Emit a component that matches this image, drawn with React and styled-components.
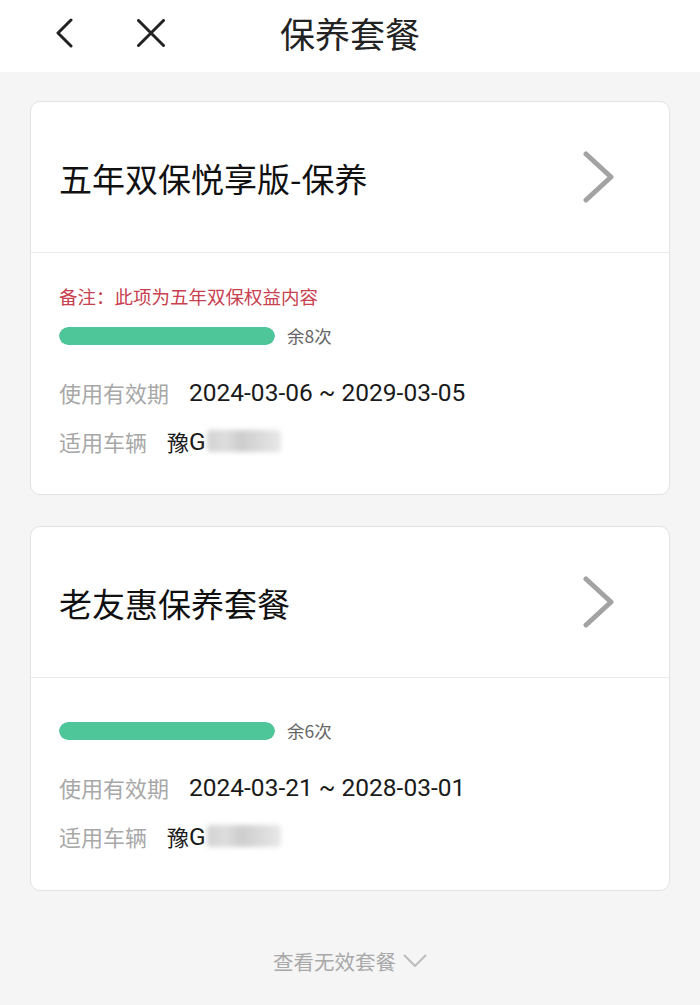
import React from "react";
import styled, { createGlobalStyle } from "styled-components";

const Global = createGlobalStyle`
  html, body { margin: 0; padding: 0; background: #f5f5f5; }
  body { font-family: "Noto Sans CJK SC", "Noto Sans", sans-serif; -webkit-font-smoothing: antialiased; }
  * { box-sizing: border-box; }
`;

const Page = styled.div`
  width: 700px;
  min-height: 1005px;
  background: #f5f5f5;
  display: flex;
  flex-direction: column;
`;

const NavBar = styled.header`
  height: 72px;
  background: #fff;
  display: grid;
  grid-template-columns: 1fr auto 1fr;
  align-items: center;
  padding: 0 55px;
`;

const NavIcons = styled.div`
  display: flex;
  align-items: center;
  gap: 64px;
  height: 100%;
  padding-bottom: 6px;
`;

const IconBtn = styled.span`
  display: flex;
  align-items: center;
  justify-content: center;
`;

const NavTitle = styled.h1`
  margin: 0;
  font-size: 35px;
  font-weight: 400;
  color: #222;
  line-height: 1;
  padding-bottom: 8px;
`;

const List = styled.main`
  display: flex;
  flex-direction: column;
  gap: 31px;
  padding: 29px 30px 0;
`;

const Card = styled.section`
  background: #fff;
  border: 1px solid #e2e2e2;
  border-radius: 10px;
  overflow: hidden;
`;

const CardHead = styled.div`
  height: 151px;
  display: flex;
  align-items: center;
  justify-content: space-between;
  padding: 0 54px 0 28px;
  border-bottom: 1px solid #ebebeb;
`;

const CardTitle = styled.h2`
  margin: 0;
  font-size: 33px;
  font-weight: 400;
  color: #111;
  line-height: 1;
  padding-top: 2px;
`;

const CardBody = styled.div`
  display: flex;
  flex-direction: column;
  padding: ${(p) => (p.$hasNote ? "31px" : "43px")} 28px ${(p) => (p.$hasNote ? "38px" : "39px")};
`;

const Note = styled.div`
  font-size: 18.5px;
  line-height: 24px;
  color: #c8414f;
  margin-bottom: 18px;
`;

const ProgressRow = styled.div`
  display: flex;
  align-items: center;
  gap: 12px;
  height: 20px;
  margin-bottom: 31px;
`;

const Track = styled.div`
  width: 216px;
  height: 18px;
  border-radius: 9px;
  background: #eee;
  overflow: hidden;
`;

const Fill = styled.div`
  height: 100%;
  border-radius: 9px;
  background: #4ec69a;
`;

const Remain = styled.span`
  font-size: 17.5px;
  color: #666;
  line-height: 20px;
`;

const InfoRow = styled.div`
  display: flex;
  align-items: center;
  height: 30px;
  font-size: 22px;
  & + & { margin-top: 19px; }
`;

const Label = styled.span`
  color: #a8a8a8;
  margin-right: 20px;
`;

const Value = styled.span`
  color: #1a1a1a;
  display: flex;
  align-items: center;
  font-family: Roboto, "Noto Sans CJK SC", sans-serif;
  font-size: 24.5px;
`;

const Han = styled.span`
  font-family: "Noto Sans CJK SC", sans-serif;
  font-size: 22px;
`;

const Blur = styled.span`
  display: inline-block;
  width: 74px;
  height: 22px;
  margin-left: 1px;
  background: linear-gradient(90deg, #d2d2d2 0%, #dedede 25%, #cdcdcd 45%, #d9d9d9 70%, #e8e8e8 100%);
  filter: blur(2.5px);
  border-radius: 4px;
`;

const Footer = styled.div`
  display: flex;
  justify-content: center;
  align-items: center;
  gap: 7px;
  margin-top: 55px;
  font-size: 20.5px;
  color: #a9a9a9;
`;

const BackIcon = () => (
  <svg width="18" height="30" viewBox="0 0 18 30">
    <path d="M16 2 L3 15 L16 28" fill="none" stroke="#222" strokeWidth="3" strokeLinecap="round" strokeLinejoin="round" />
  </svg>
);

const CloseIcon = () => (
  <svg width="28" height="28" viewBox="0 0 28 28">
    <path d="M1.5 1.5 L26.5 26.5 M26.5 1.5 L1.5 26.5" fill="none" stroke="#222" strokeWidth="3" strokeLinecap="round" />
  </svg>
);

const ArrowRight = () => (
  <svg width="32" height="52" viewBox="0 0 32 52">
    <path d="M3 3 L28 26 L3 49" fill="none" stroke="#a3a3a3" strokeWidth="5" strokeLinecap="round" strokeLinejoin="round" />
  </svg>
);

const ArrowDown = () => (
  <svg width="24" height="14" viewBox="0 0 24 14">
    <path d="M1.5 1.5 L12 12 L22.5 1.5" fill="none" stroke="#bdbdbd" strokeWidth="2" strokeLinecap="round" strokeLinejoin="round" />
  </svg>
);

const packages = [
  { title: "五年双保悦享版-保养", note: "备注：此项为五年双保权益内容", remain: 8, pct: 100, period: "2024-03-06 ~ 2029-03-05" },
  { title: "老友惠保养套餐", note: null, remain: 6, pct: 100, period: "2024-03-21 ~ 2028-03-01" },
];

export default function App() {
  return (
    <Page>
      <Global />
      <NavBar>
        <NavIcons>
          <IconBtn><BackIcon /></IconBtn>
          <IconBtn><CloseIcon /></IconBtn>
        </NavIcons>
        <NavTitle>保养套餐</NavTitle>
        <div />
      </NavBar>
      <List>
        {packages.map((p) => (
          <Card key={p.title}>
            <CardHead>
              <CardTitle>{p.title}</CardTitle>
              <ArrowRight />
            </CardHead>
            <CardBody $hasNote={!!p.note}>
              {p.note && <Note>{p.note}</Note>}
              <ProgressRow>
                <Track><Fill style={{ width: `${p.pct}%` }} /></Track>
                <Remain>余{p.remain}次</Remain>
              </ProgressRow>
              <InfoRow>
                <Label>使用有效期</Label>
                <Value>{p.period}</Value>
              </InfoRow>
              <InfoRow>
                <Label>适用车辆</Label>
                <Value><Han>豫</Han>G<Blur /></Value>
              </InfoRow>
            </CardBody>
          </Card>
        ))}
      </List>
      <Footer>
        <span>查看无效套餐</span>
        <ArrowDown />
      </Footer>
    </Page>
  );
}
